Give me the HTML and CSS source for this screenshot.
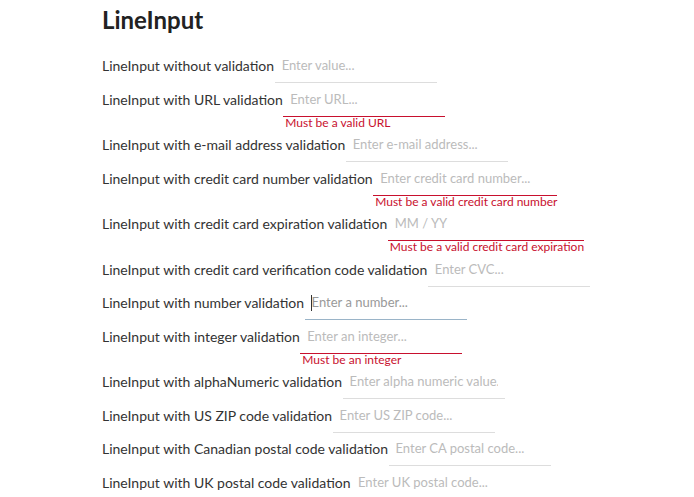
FILE: index.html
```html
<!DOCTYPE html>
<html>
<head>
<meta charset="utf-8">
<link rel="stylesheet" href="styles.css">
</head>
<body>
<div class="page">
  <h1 class="title">LineInput</h1>
  <div class="row"><span class="label">LineInput without validation</span><div class="field"><input class="line" placeholder="Enter value..."></div></div>
  <div class="row"><span class="label">LineInput with URL validation</span><div class="field"><input class="line invalid" placeholder="Enter URL..."><div class="error">Must be a valid URL</div></div></div>
  <div class="row"><span class="label">LineInput with e-mail address validation</span><div class="field"><input class="line" placeholder="Enter e-mail address..."></div></div>
  <div class="row"><span class="label">LineInput with credit card number validation</span><div class="field"><input class="line invalid" placeholder="Enter credit card number..."><div class="error">Must be a valid credit card number</div></div></div>
  <div class="row"><span class="label">LineInput with credit card expiration validation</span><div class="field"><input class="line invalid" placeholder="MM / YY"><div class="error">Must be a valid credit card expiration</div></div></div>
  <div class="row"><span class="label">LineInput with credit card verification code validation</span><div class="field"><input class="line" placeholder="Enter CVC..."></div></div>
  <div class="row"><span class="label">LineInput with number validation</span><div class="field focused"><input class="line active" placeholder="Enter a number..."></div></div>
  <div class="row"><span class="label">LineInput with integer validation</span><div class="field"><input class="line invalid" placeholder="Enter an integer..."><div class="error">Must be an integer</div></div></div>
  <div class="row"><span class="label">LineInput with alphaNumeric validation</span><div class="field"><input class="line" placeholder="Enter alpha numeric value..."></div></div>
  <div class="row"><span class="label">LineInput with US ZIP code validation</span><div class="field"><input class="line" placeholder="Enter US ZIP code..."></div></div>
  <div class="row"><span class="label">LineInput with Canadian postal code validation</span><div class="field"><input class="line" placeholder="Enter CA postal code..."></div></div>
  <div class="row"><span class="label">LineInput with UK postal code validation</span><div class="field"><input class="line" placeholder="Enter UK postal code..."></div></div>
</div>
</body>
</html>
```

FILE: styles.css
```css
html, body {
  margin: 0;
  padding: 0;
  background: #fff;
}
body {
  font-family: Lato, "Open Sans", sans-serif;
  color: #333;
}
.page {
  padding: 5px 0 0 102px;
}
.title {
  margin: 0 0 15px 0;
  font-size: 24px;
  line-height: 30px;
  font-weight: 700;
  color: #222;
}
.row {
  display: flex;
  align-items: flex-start;
  margin-bottom: 0.5px;
}
.label {
  font-size: 14px;
  line-height: 31px;
  color: #333;
  white-space: nowrap;
}
.field {
  position: relative;
  display: flex;
  flex-direction: column;
  align-items: flex-start;
  min-width: 162px;
  margin-left: 0.5px;
}
.line {
  box-sizing: border-box;
  width: 0;
  min-width: 100%;
  height: 33px;
  margin: 0;
  padding: 0 7px 2px 7px;
  border: none;
  border-bottom: 1px solid #ddd;
  outline: none;
  background: transparent;
  font-family: Lato, "Open Sans", sans-serif;
  font-size: 13px;
  color: #333;
}
.line::placeholder {
  color: #bbb;
  opacity: 1;
}
.line.invalid {
  border-bottom-color: #c8102e;
}
.line.active {
  border-bottom-color: #9ab4c8;
}
.line.active::placeholder {
  color: #999;
}
.focused::before {
  content: "";
  position: absolute;
  left: 6px;
  top: 8px;
  width: 1px;
  height: 16px;
  background: #333;
}
.error {
  font-size: 12px;
  line-height: 12px;
  padding-left: 2px;
  white-space: nowrap;
  color: #c8102e;
}
```
